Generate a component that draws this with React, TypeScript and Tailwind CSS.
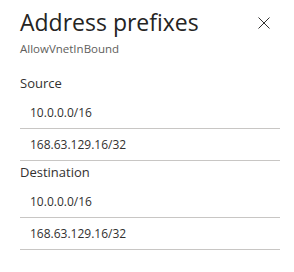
const sections = [
  { label: "Source", items: ["10.0.0.0/16", "168.63.129.16/32"] },
  { label: "Destination", items: ["10.0.0.0/16", "168.63.129.16/32"] },
]

export default function App() {
  return (
    <div className="w-[294px] h-[272px] bg-white pl-5 pr-[14px] text-[#323130] font-['Open_Sans',sans-serif]">
      <div className="flex items-start justify-between pt-[6px]">
        <h2 className="text-[23px] leading-8 text-[#252423]">Address prefixes</h2>
        <button className="mt-[11px] mr-[10px] text-[#323130]" title="Close">
          <svg width="12" height="12" viewBox="0 0 12 12" fill="none" stroke="currentColor" strokeWidth="1">
            <path d="M0.5 0.5l11 11M11.5 0.5l-11 11" />
          </svg>
        </button>
      </div>
      <div className="text-[11.5px] leading-4 text-[#605e5c] mt-[3px]">AllowVnetInBound</div>

      <div className="mt-[15px]">
        {sections.map(section => (
          <div key={section.label}>
            <div className="h-[25px] pt-[1px] text-[13px] leading-5">{section.label}</div>
            {section.items.map(item => (
              <div key={item} className="h-8 flex items-center pl-[10px] border-b border-[#c8c6c4] text-[12px]">
                {item}
              </div>
            ))}
          </div>
        ))}
      </div>
    </div>
  )
}
